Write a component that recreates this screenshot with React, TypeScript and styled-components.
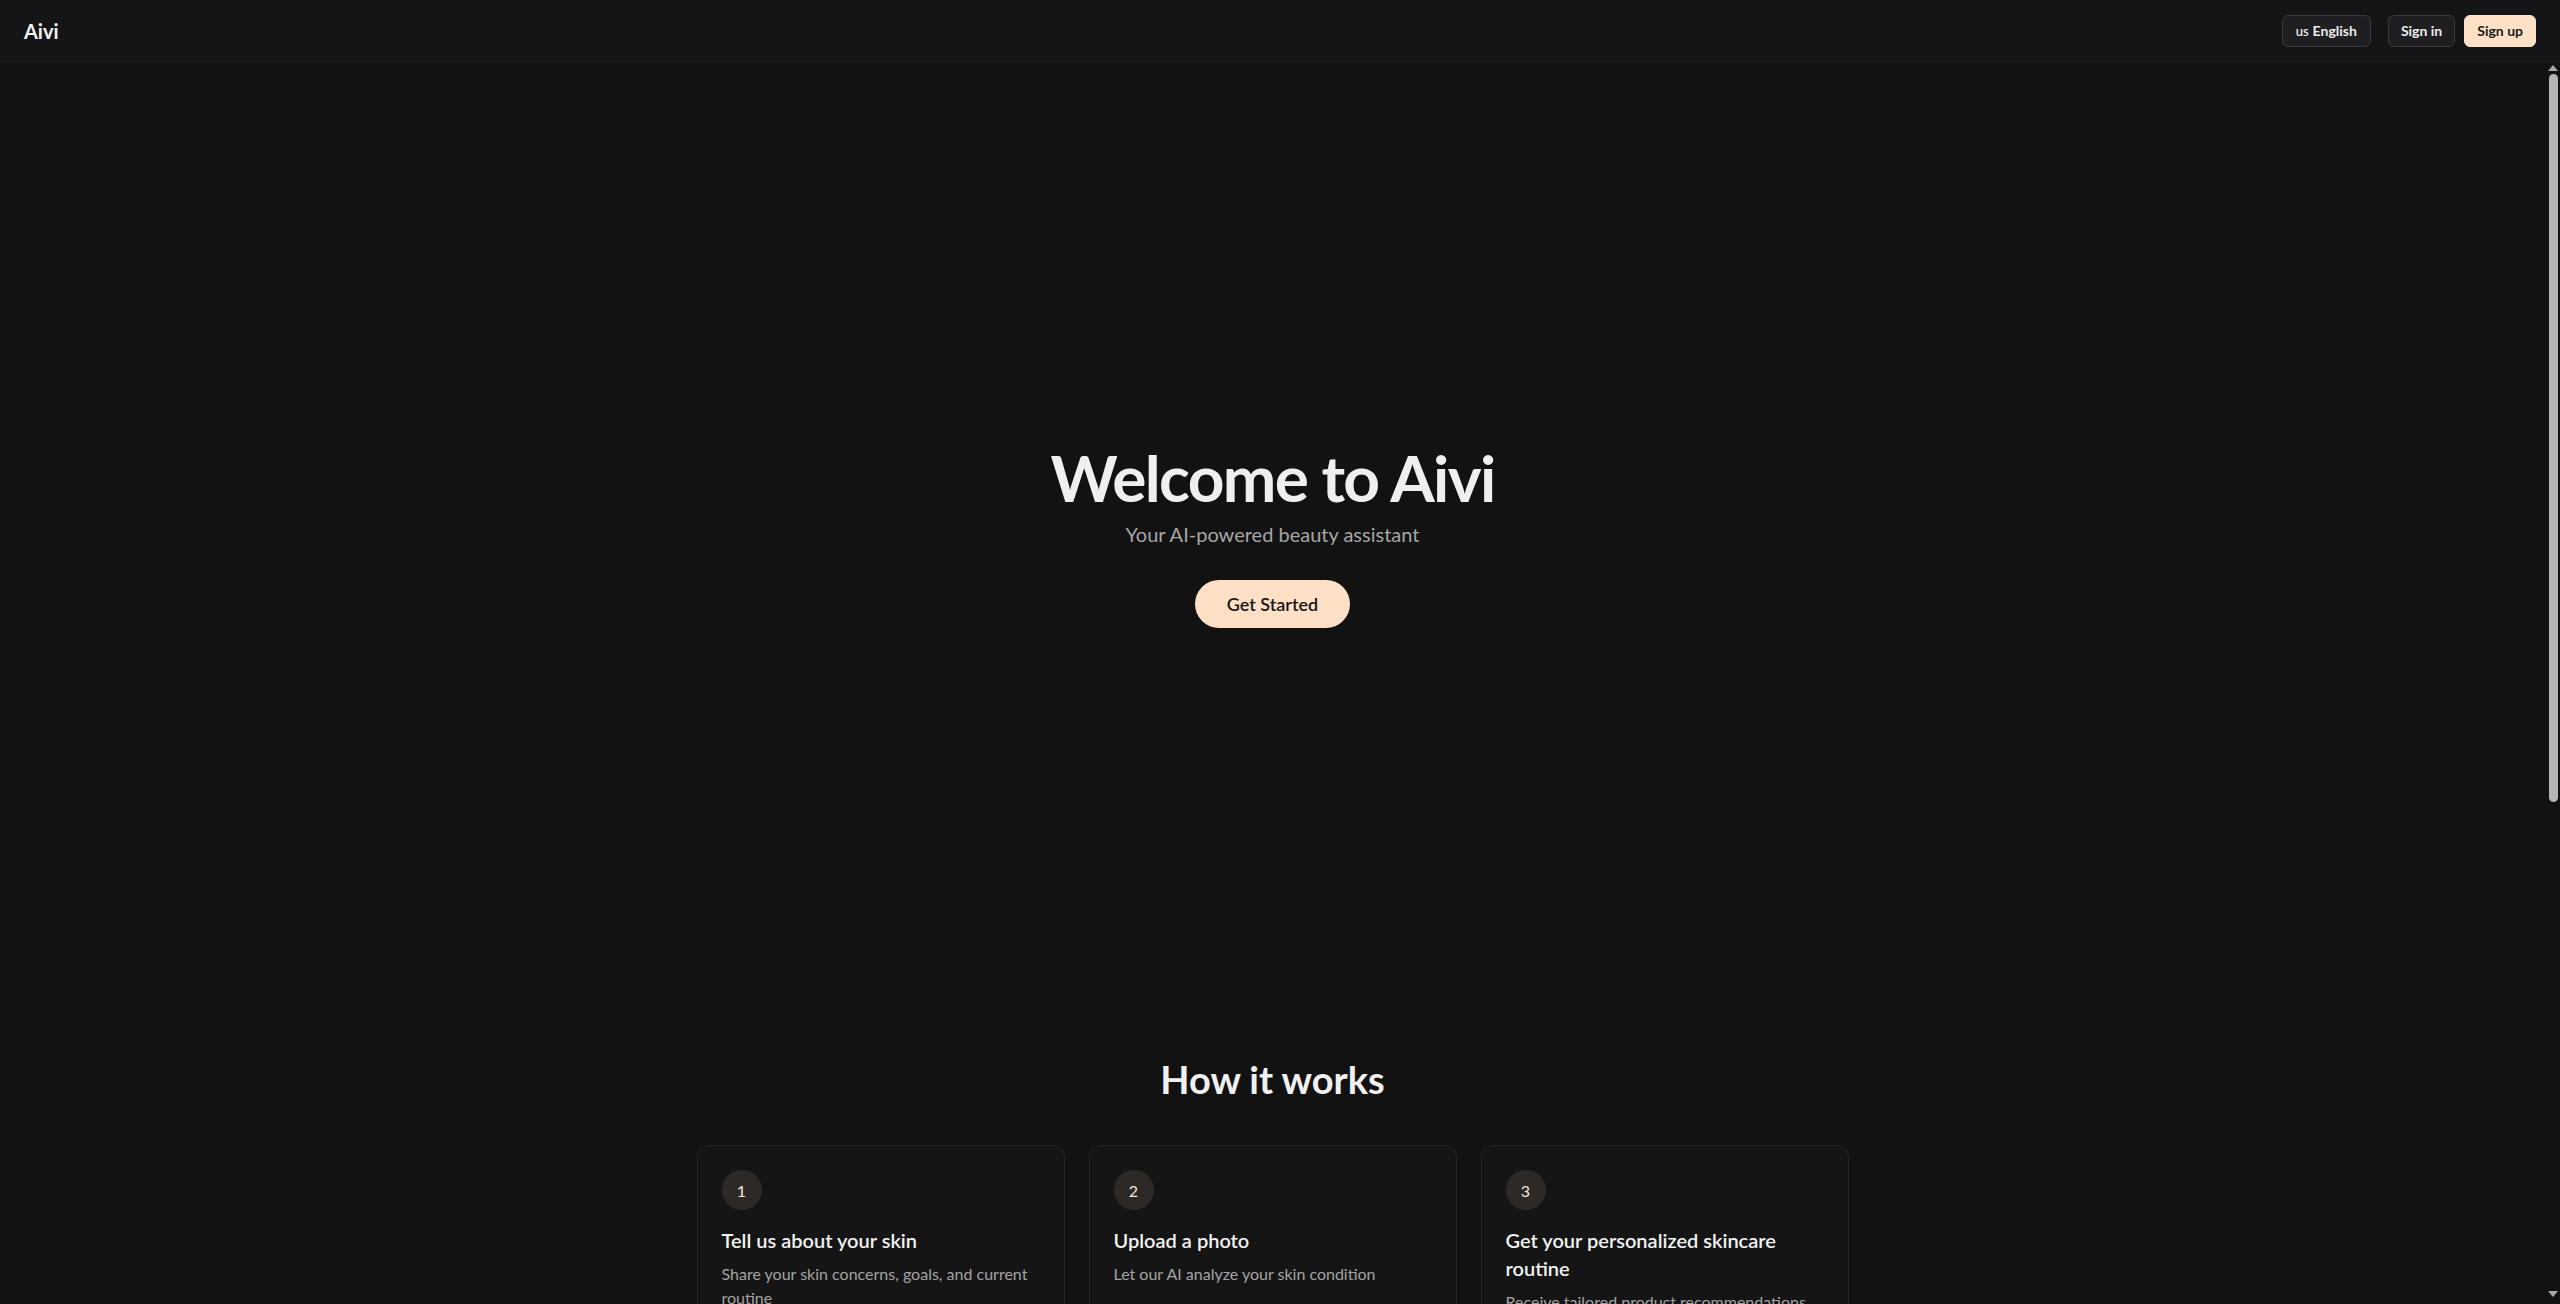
import React from 'react';
import styled, { createGlobalStyle } from 'styled-components';

const GlobalStyle = createGlobalStyle`
  * { box-sizing: border-box; }
  html, body, #root { margin: 0; height: 100%; }
  body {
    background: #121212;
    color: #f0f0f0;
    font-family: 'Segoe UI', Lato, 'Noto Sans', sans-serif;
    overflow: hidden;
  }
`;

const Shell = styled.div`
  display: flex;
  flex-direction: column;
  height: 100vh;
`;

const Header = styled.header`
  display: flex;
  align-items: center;
  justify-content: space-between;
  height: 62px;
  padding: 0 24px;
  background: #151517;
  border-bottom: 1px solid #1d1c1a;
  flex-shrink: 0;
`;

const Logo = styled.div`
  font-size: 20px;
  font-weight: 700;
  color: #f2f2f2;
`;

const Nav = styled.nav`
  display: flex;
  align-items: center;
  gap: 9px;
`;

const NavButton = styled.button<{ $primary?: boolean; $spaced?: boolean }>`
  height: 32px;
  padding: 0 ${p => (p.$spaced ? '13px' : '12px')};
  border-radius: 6px;
  font-family: inherit;
  font-size: 14px;
  font-weight: 700;
  cursor: pointer;
  margin-right: ${p => (p.$spaced ? '8px' : '0')};
  border: 1px solid ${p => (p.$primary ? '#fde0c6' : '#3a3a3c')};
  background: ${p => (p.$primary ? '#fde0c6' : '#1f1f22')};
  color: ${p => (p.$primary ? '#1b1b1b' : '#ececec')};
`;

const Flag = styled.span`
  font-size: 13px;
  font-weight: 600;
  margin-right: 4px;
`;

const Viewport = styled.div`
  flex: 1;
  min-height: 0;
  display: flex;
`;

const Main = styled.main`
  flex: 1;
  overflow: hidden;
`;

/* fake classic scrollbar, the page is photographed scrolled to the top */
const Rail = styled.div`
  width: 15px;
  flex-shrink: 0;
  display: flex;
  flex-direction: column;
  align-items: center;
  background: #121212;
  padding: 3px 0 7px 1px;
`;

const Arrow = styled.div<{ $down?: boolean }>`
  width: 0;
  height: 0;
  border-left: 5px solid transparent;
  border-right: 5px solid transparent;
  ${p =>
    p.$down
      ? 'border-top: 6px solid #a8a8a8; margin-top: auto;'
      : 'border-bottom: 6px solid #a8a8a8;'}
`;

const Thumb = styled.div`
  width: 9px;
  height: 728px;
  margin-top: 3px;
  border-radius: 5px;
  background: #b5b5b5;
`;

const Hero = styled.section`
  min-height: 950px;
  display: flex;
  flex-direction: column;
  align-items: center;
  justify-content: center;
  text-align: center;
`;

const Title = styled.h1`
  margin: 0;
  font-size: 64px;
  line-height: 1;
  font-weight: 700;
  color: #efefef;
  letter-spacing: -1.6px;
`;

const Subtitle = styled.p`
  margin: 10px 0 0;
  font-size: 20px;
  line-height: 28px;
  color: #a6a6a6;
`;

const CtaButton = styled.button`
  margin-top: 32px;
  height: 48px;
  padding: 0 32px;
  border: none;
  border-radius: 999px;
  background: #fde0c6;
  color: #161616;
  font-family: inherit;
  font-size: 18px;
  font-weight: 600;
  cursor: pointer;
`;

const Steps = styled.section`
  padding-top: 47px;
  display: flex;
  flex-direction: column;
  align-items: center;
`;

const SectionTitle = styled.h2`
  margin: 0 0 46px;
  font-size: 38px;
  line-height: 40px;
  font-weight: 700;
  color: #f0f0f0;
`;

const Grid = styled.div`
  width: 1152px;
  display: grid;
  grid-template-columns: repeat(3, 1fr);
  gap: 24px;
`;

const Card = styled.div`
  padding: 24px;
  border: 1px solid #252525;
  border-radius: 12px;
  background: #151515;
`;

const StepNumber = styled.div`
  width: 40px;
  height: 40px;
  border-radius: 50%;
  background: #2c2927;
  color: #f3e6da;
  display: flex;
  align-items: center;
  justify-content: center;
  font-size: 16px;
  margin-bottom: 16px;
`;

const CardTitle = styled.h3`
  margin: 0 0 8px;
  font-size: 20px;
  line-height: 28px;
  font-weight: 600;
  color: #f2f2f2;
`;

const CardText = styled.p`
  margin: 0;
  font-size: 16px;
  line-height: 24px;
  color: #a3a3a3;
`;

const steps = [
  { n: 1, title: 'Tell us about your skin', text: 'Share your skin concerns, goals, and current routine' },
  { n: 2, title: 'Upload a photo', text: 'Let our AI analyze your skin condition' },
  {
    n: 3,
    title: 'Get your personalized skincare routine',
    text: 'Receive tailored product recommendations and a routine built for you',
  },
];

export default function App() {
  return (
    <Shell>
      <GlobalStyle />
      <Header>
        <Logo>Aivi</Logo>
        <Nav>
          <NavButton $spaced>
            <Flag>us</Flag>English
          </NavButton>
          <NavButton>Sign in</NavButton>
          <NavButton $primary>Sign up</NavButton>
        </Nav>
      </Header>
      <Viewport>
        <Main>
          <Hero>
            <Title>Welcome to Aivi</Title>
            <Subtitle>Your AI-powered beauty assistant</Subtitle>
            <CtaButton>Get Started</CtaButton>
          </Hero>
          <Steps>
            <SectionTitle>How it works</SectionTitle>
            <Grid>
              {steps.map(s => (
                <Card key={s.n}>
                  <StepNumber>{s.n}</StepNumber>
                  <CardTitle>{s.title}</CardTitle>
                  <CardText>{s.text}</CardText>
                </Card>
              ))}
            </Grid>
          </Steps>
        </Main>
        <Rail>
          <Arrow />
          <Thumb />
          <Arrow $down />
        </Rail>
      </Viewport>
    </Shell>
  );
}
